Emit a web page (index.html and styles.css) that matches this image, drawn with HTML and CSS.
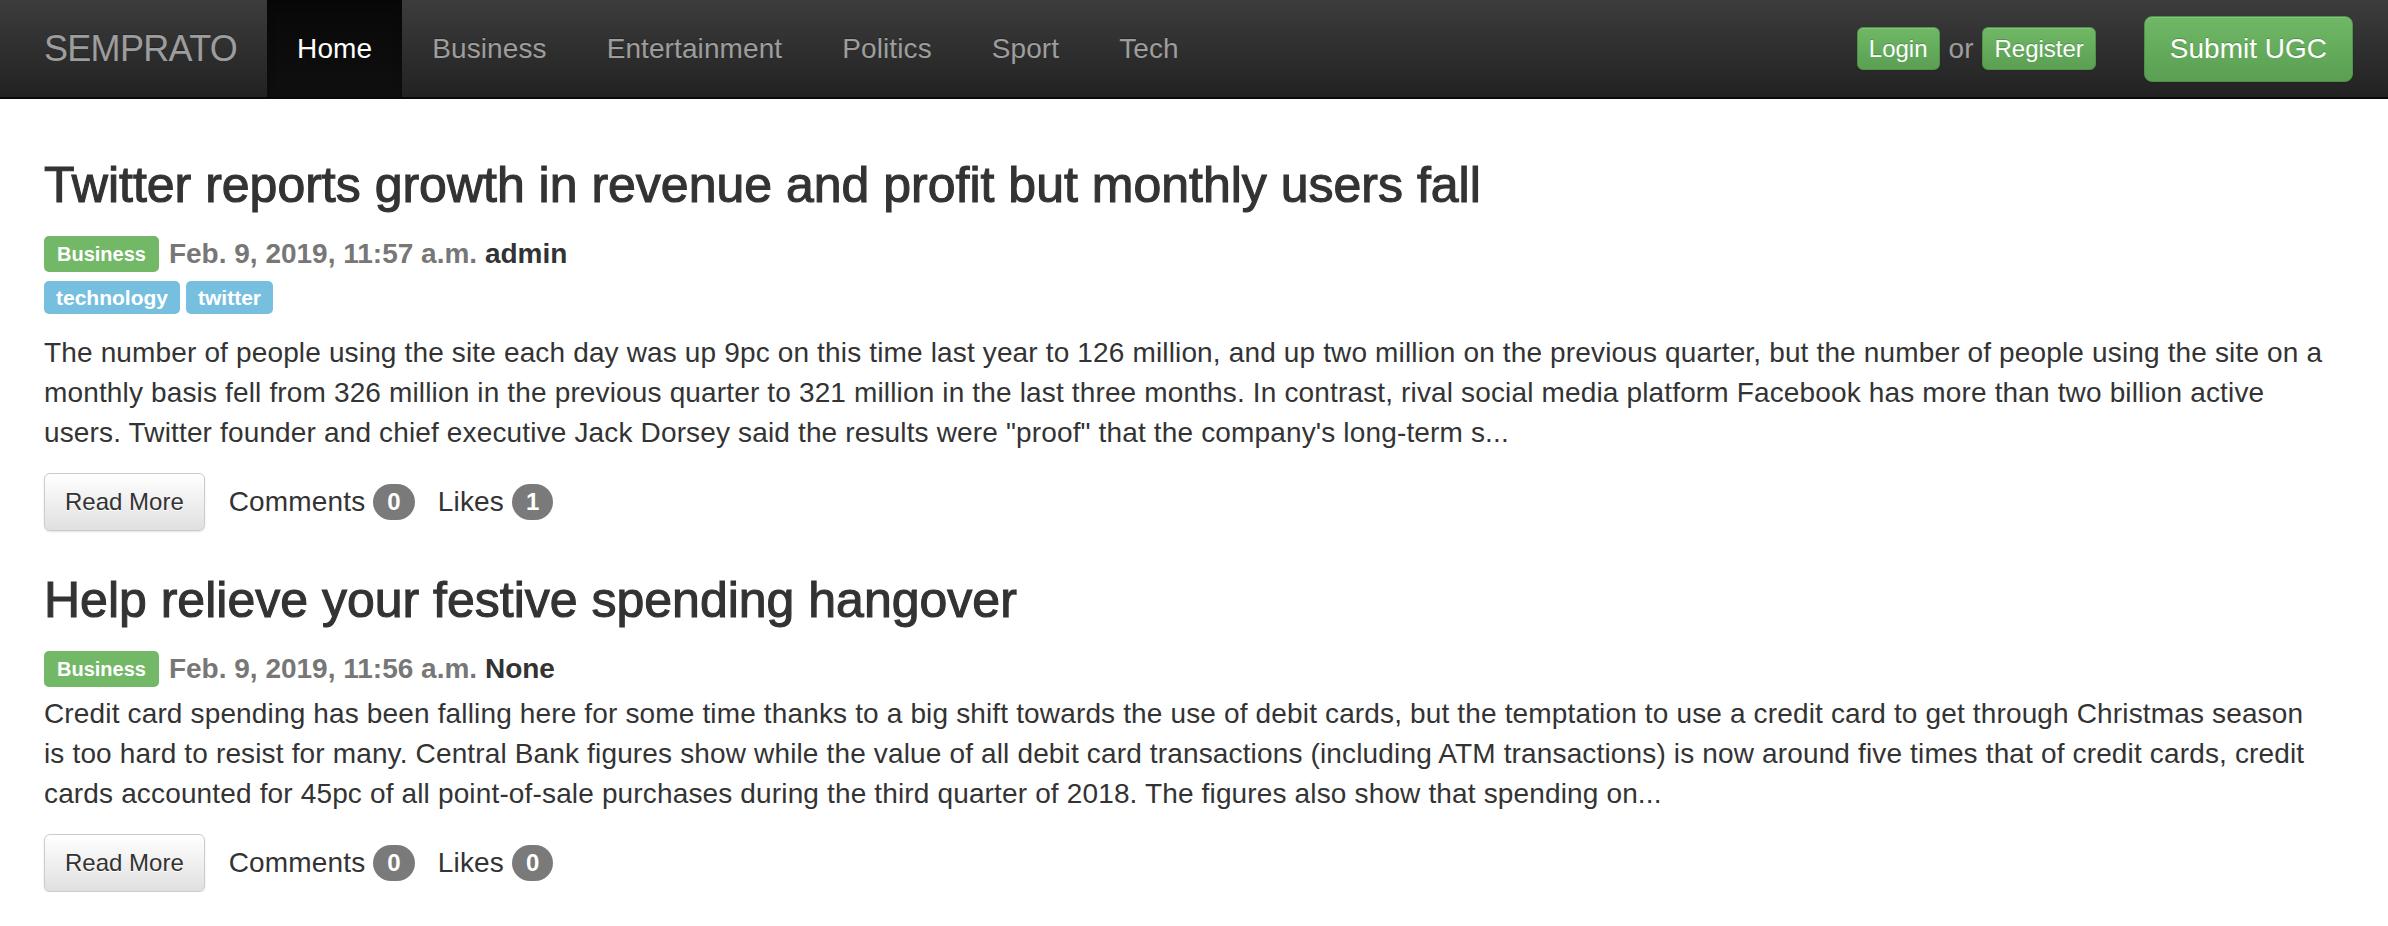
FILE: index.html
```html
<!DOCTYPE html>
<html lang="en">
<head>
<meta charset="utf-8">
<title>SEMPRATO</title>
<link rel="stylesheet" href="styles.css">
</head>
<body>
<nav class="navbar">
  <a class="brand" href="#">SEMPRATO</a>
  <ul class="nav">
    <li class="active"><a href="#">Home</a></li>
    <li><a href="#">Business</a></li>
    <li><a href="#">Entertainment</a></li>
    <li><a href="#">Politics</a></li>
    <li><a href="#">Sport</a></li>
    <li><a href="#">Tech</a></li>
  </ul>
  <div class="nav-right">
    <div class="auth">
      <a class="btn btn-success btn-xs" href="#">Login</a>
      <span class="or">or</span>
      <a class="btn btn-success btn-xs" href="#">Register</a>
    </div>
    <a class="btn btn-success btn-md" href="#">Submit UGC</a>
  </div>
</nav>
<main class="content">
  <article class="post">
    <h2 class="post-title">Twitter reports growth in revenue and profit but monthly users fall</h2>
    <div class="meta">
      <span class="label label-success">Business</span>
      <span class="date">Feb. 9, 2019, 11:57 a.m. <span class="author">admin</span></span>
    </div>
    <div class="tags">
      <span class="label label-info tag">technology</span>
      <span class="label label-info tag">twitter</span>
    </div>
    <p class="summary">The number of people using the site each day was up 9pc on this time last year to 126 million, and up two million on the previous quarter, but the number of people using the site on a monthly basis fell from 326 million in the previous quarter to 321 million in the last three months. In contrast, rival social media platform Facebook has more than two billion active users. Twitter founder and chief executive Jack Dorsey said the results were "proof" that the company's long-term s...</p>
    <div class="actions">
      <a class="btn btn-default btn-sm" href="#">Read More</a>
      <span class="stat">Comments <span class="badge">0</span></span>
      <span class="stat">Likes <span class="badge">1</span></span>
    </div>
  </article>
  <article class="post">
    <h2 class="post-title">Help relieve your festive spending hangover</h2>
    <div class="meta">
      <span class="label label-success">Business</span>
      <span class="date">Feb. 9, 2019, 11:56 a.m. <span class="author">None</span></span>
    </div>
    <p class="summary">Credit card spending has been falling here for some time thanks to a big shift towards the use of debit cards, but the temptation to use a credit card to get through Christmas season is too hard to resist for many. Central Bank figures show while the value of all debit card transactions (including ATM transactions) is now around five times that of credit cards, credit cards accounted for 45pc of all point-of-sale purchases during the third quarter of 2018. The figures also show that spending on...</p>
    <div class="actions">
      <a class="btn btn-default btn-sm" href="#">Read More</a>
      <span class="stat">Comments <span class="badge">0</span></span>
      <span class="stat">Likes <span class="badge">0</span></span>
    </div>
  </article>
</main>
</body>
</html>
```

FILE: styles.css
```css
* {
  box-sizing: border-box;
}

html, body {
  margin: 0;
  padding: 0;
  background: #fff;
}

body {
  font-family: "Liberation Sans", Arial, Helvetica, sans-serif;
  font-size: 28px;
  line-height: 40px;
  color: #333;
}

a {
  text-decoration: none;
}

/* ---------- navbar ---------- */
.navbar {
  display: flex;
  align-items: center;
  height: 99px;
  padding: 0 35px 0 14px;
  background: linear-gradient(to bottom, #3c3c3c 0%, #222 100%);
  border-bottom: 2px solid #080808;
}

.brand {
  display: block;
  padding: 0 30px;
  font-size: 36px;
  letter-spacing: -0.7px;
  line-height: 97px;
  color: #9d9d9d;
  text-shadow: 0 -1px 0 rgba(0, 0, 0, .25);
}

.nav {
  display: flex;
  margin: 0;
  padding: 0;
  list-style: none;
  height: 97px;
}

.nav a {
  display: block;
  padding: 0 30px;
  line-height: 97px;
  font-size: 28px;
  letter-spacing: 0.1px;
  color: #9d9d9d;
  text-shadow: 0 -1px 0 rgba(0, 0, 0, .25);
}

.nav .active a {
  color: #fff;
  background: linear-gradient(to bottom, #080808 0%, #0f0f0f 100%);
  box-shadow: inset 0 3px 9px rgba(0, 0, 0, .25);
}

.nav-right {
  margin-left: auto;
  display: flex;
  align-items: center;
  gap: 48px;
}

.auth {
  display: flex;
  align-items: center;
}

.or {
  margin: 0 9px;
  color: #9d9d9d;
  font-size: 28px;
}

/* ---------- buttons ---------- */
.btn {
  display: inline-block;
  border: 1px solid transparent;
  white-space: nowrap;
  text-align: center;
}

.btn-success {
  color: #fff;
  background: linear-gradient(to bottom, #70b866 0%, #5a9f52 100%);
  border-color: #4f9348;
  text-shadow: 0 -1px 0 rgba(0, 0, 0, .2);
  box-shadow: inset 0 1px 0 rgba(255, 255, 255, .15), 0 1px 1px rgba(0, 0, 0, .075);
}

.btn-xs {
  padding: 2px 11px;
  font-size: 24px;
  line-height: 37px;
  border-radius: 6px;
}

.btn-md {
  padding: 12px 25px;
  font-size: 28px;
  line-height: 40px;
  border-radius: 8px;
}

.btn-sm {
  padding: 10px 20px;
  font-size: 24px;
  line-height: 36px;
  border-radius: 6px;
}

.btn-default {
  color: #333;
  background: linear-gradient(to bottom, #fff 0%, #e0e0e0 100%);
  border-color: #ccc;
  text-shadow: 0 1px 0 #fff;
  box-shadow: inset 0 1px 0 rgba(255, 255, 255, .15), 0 1px 2px rgba(0, 0, 0, .12);
}

/* ---------- content ---------- */
.content {
  padding: 17px 60px 0 44px;
}

.post-title {
  margin: 42px 0 21px;
  font-size: 50px;
  line-height: 55px;
  font-weight: normal;
  color: #333;
  -webkit-text-stroke: 1.1px #333;
}

.meta {
  display: flex;
  align-items: center;
  height: 40px;
  font-weight: bold;
}

.date {
  color: #777;
}

.author {
  color: #333;
}

.label {
  display: inline-block;
  color: #fff;
  font-weight: bold;
  white-space: nowrap;
  border-radius: 5px;
}

.meta .label {
  margin-right: 10px;
  padding: 8px 13px 8px;
  font-size: 20px;
  line-height: 20px;
}

.label-success {
  background: #73b866;
}

.label-info {
  background: #77bfdf;
}

.tags {
  display: flex;
  align-items: center;
  gap: 6px;
  height: 40px;
  margin: 3px 0 16px;
}

.tag {
  padding: 6px 12px;
  font-size: 21px;
  line-height: 21px;
}

.summary {
  margin: 5px 0 20px;
  letter-spacing: 0.15px;
}

.actions {
  display: flex;
  align-items: center;
}

.stat {
  margin-left: 24px;
  display: inline-flex;
  align-items: center;
  gap: 8px;
  letter-spacing: 0.15px;
}

.stat + .stat {
  margin-left: 23px;
}

.badge {
  display: inline-block;
  min-width: 41px;
  padding: 6px 14px;
  font-size: 24px;
  line-height: 24px;
  font-weight: bold;
  color: #fff;
  text-align: center;
  background: #7a7a7a;
  border-radius: 20px;
}
```
